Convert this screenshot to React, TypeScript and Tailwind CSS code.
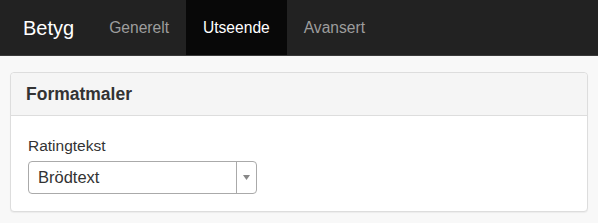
const NAV = [
  { label: "Generelt", active: false },
  { label: "Utseende", active: true },
  { label: "Avansert", active: false },
];

export default function App() {
  return (
    <div className="min-h-[223px] bg-[#f8f8f8] font-['Liberation_Sans',Arial,sans-serif]">
      <nav className="flex h-[56px] items-stretch border-b border-[#3a3a3a] bg-[#222222]">
        <div className="flex items-center pl-[23px] pr-[18px] text-[20px] text-white">Betyg</div>
        {NAV.map((n) => (
          <a
            key={n.label}
            className={
              n.active
                ? "flex items-center bg-[#080808] px-[17px] text-[15.6px] text-white"
                : "flex items-center px-[17px] text-[15.6px] text-[#9d9d9d]"
            }
          >
            {n.label}
          </a>
        ))}
      </nav>

      <div className="px-[10px] pt-[16px]">
        <div className="rounded-[4px] border border-[#dddddd] bg-white shadow-[0_1px_1px_rgba(0,0,0,0.05)]">
          <div className="flex h-[43px] items-center rounded-t-[4px] border-b border-[#dddddd] bg-[#f5f5f5] px-[15px]">
            <h3 className="text-[17.5px] font-bold text-[#333333]">Formatmaler</h3>
          </div>
          <div className="px-[17px] pt-[19px] pb-[17px]">
            <label className="block text-[15.5px] leading-[22px] text-[#333333]">Ratingtekst</label>
            <div className="mt-[4px] flex h-[33px] w-[229px] items-stretch rounded-[4px] border border-[#aaaaaa] bg-white">
              <span className="flex flex-1 items-center pl-[9px] text-[16.5px] text-[#333333]">Brödtext</span>
              <span className="flex w-[20px] items-center justify-center border-l border-[#aaaaaa]">
                <svg width="7" height="5" viewBox="0 0 7 5">
                  <path d="M0 0h7L3.5 5z" fill="#888888" />
                </svg>
              </span>
            </div>
          </div>
        </div>
      </div>
    </div>
  );
}
